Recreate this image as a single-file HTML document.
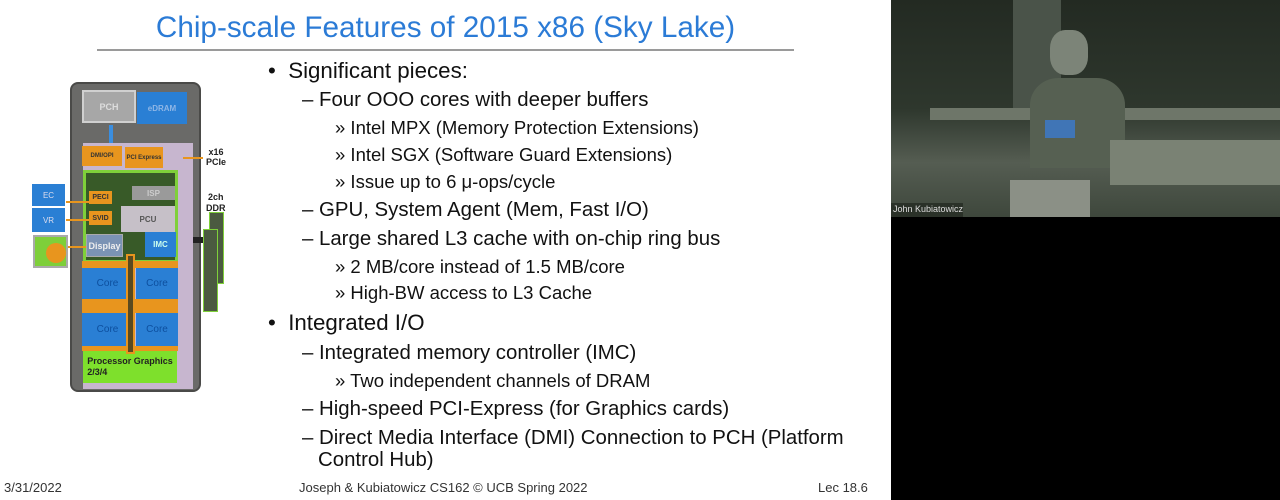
<!DOCTYPE html>
<html><head><meta charset="utf-8"><style>
body{margin:0;width:1280px;height:500px;position:relative;background:#fff;overflow:hidden;font-family:"Liberation Sans",Arial,sans-serif;color:#111}
.a{position:absolute;white-space:nowrap}
.l1{font-size:22.3px;left:268px}
.l2{font-size:20.4px;left:302px}
.l3{font-size:18.5px;left:335px}
.b{position:absolute;box-sizing:border-box}
.t{display:flex;align-items:center;justify-content:center;font-size:8px;color:#ddd;font-weight:bold}
</style></head><body>
<div class="a" style="left:0;width:891px;top:11px;text-align:center;font-size:29.7px;color:#2b7bd6">Chip-scale Features of 2015 x86 (Sky Lake)</div>
<div class="b" style="left:97px;top:49px;width:697px;height:2px;background:#9a9a9a"></div>

<div class="a l1" style="top:58px">•&nbsp;&nbsp;Significant pieces:</div>
<div class="a l2" style="top:89px">– Four OOO cores with deeper buffers</div>
<div class="a l3" style="top:117px">» Intel MPX (Memory Protection Extensions)</div>
<div class="a l3" style="top:144px">» Intel SGX (Software Guard Extensions)</div>
<div class="a l3" style="top:171px">» Issue up to 6 μ-ops/cycle</div>
<div class="a l2" style="top:199px">– GPU, System Agent (Mem, Fast I/O)</div>
<div class="a l2" style="top:228px">– Large shared L3 cache with on-chip ring bus</div>
<div class="a l3" style="top:256px">» 2 MB/core instead of 1.5 MB/core</div>
<div class="a l3" style="top:282px">» High-BW access to L3 Cache</div>
<div class="a l1" style="top:310px">•&nbsp;&nbsp;Integrated I/O</div>
<div class="a l2" style="top:342px">– Integrated memory controller (IMC)</div>
<div class="a l3" style="top:370px">» Two independent channels of DRAM</div>
<div class="a l2" style="top:398px">– High-speed PCI-Express (for Graphics cards)</div>
<div class="a l2" style="top:427px">– Direct Media Interface (DMI) Connection to PCH (Platform</div>
<div class="a l2" style="top:449px;left:318px">Control Hub)</div>

<div class="a" style="left:4px;top:480px;font-size:13px;color:#333">3/31/2022</div>
<div class="a" style="left:299px;top:480px;font-size:13px;color:#333">Joseph &amp; Kubiatowicz CS162 © UCB Spring 2022</div>
<div class="a" style="left:818px;top:480px;font-size:13px;color:#333">Lec 18.6</div>

<!-- chip -->
<div class="b" style="left:70px;top:82px;width:131px;height:310px;background:#6a6a68;border:2px solid #4a4a48;border-radius:8px"></div>
<div class="b t" style="left:82px;top:90px;width:54px;height:33px;background:#a7a7a7;border:2px solid #d0d0d0;font-size:9px">PCH</div>
<div class="b t" style="left:137px;top:92px;width:50px;height:32px;background:#2a7fd4;font-size:8px;color:#8fb6e6">eDRAM</div>
<div class="b" style="left:109px;top:125px;width:4px;height:20px;background:#3a8ee0"></div>
<div class="b" style="left:83px;top:143px;width:110px;height:246px;background:#c7b6cf"></div>
<div class="b t" style="left:82px;top:146px;width:40px;height:20px;background:#e8951e;color:#333;font-size:6px">DMI/OPI</div>
<div class="b t" style="left:125px;top:147px;width:38px;height:21px;background:#e8951e;color:#333;font-size:6px">PCI Express</div>
<div class="b" style="left:83px;top:170px;width:95px;height:93px;background:#385a28;border:3px solid #7fd03a"></div>
<div class="b t" style="left:132px;top:186px;width:43px;height:14px;background:#9a9a9a;color:#ccc">ISP</div>
<div class="b t" style="left:89px;top:191px;width:23px;height:13px;background:#e8951e;color:#333;font-size:7px">PECI</div>
<div class="b t" style="left:89px;top:211px;width:23px;height:14px;background:#e8951e;color:#333;font-size:7px">SVID</div>
<div class="b t" style="left:121px;top:206px;width:54px;height:26px;background:#c6c0c8;color:#555">PCU</div>
<div class="b t" style="left:86px;top:234px;width:37px;height:23px;background:#7b93b4;border:1px solid #aaa;color:#eee;font-size:9px">Display</div>
<div class="b t" style="left:145px;top:232px;width:31px;height:25px;background:#2a7fd4;color:#cfe">IMC</div>
<div class="b" style="left:82px;top:261px;width:96px;height:7px;background:#e8951e"></div>
<div class="b t" style="left:82px;top:268px;width:51px;height:31px;background:#2a7fd4;color:#0d4f9e;font-size:10px;font-weight:normal">Core</div>
<div class="b t" style="left:136px;top:268px;width:42px;height:31px;background:#2a7fd4;color:#0d4f9e;font-size:10px;font-weight:normal">Core</div>
<div class="b" style="left:82px;top:299px;width:96px;height:14px;background:#e8951e"></div>
<div class="b t" style="left:82px;top:313px;width:51px;height:33px;background:#2a7fd4;color:#0d4f9e;font-size:10px;font-weight:normal">Core</div>
<div class="b t" style="left:136px;top:313px;width:42px;height:33px;background:#2a7fd4;color:#0d4f9e;font-size:10px;font-weight:normal">Core</div>
<div class="b" style="left:82px;top:346px;width:96px;height:5px;background:#e8951e"></div>
<div class="b t" style="left:83px;top:351px;width:94px;height:32px;background:#7ee02c;color:#222;font-size:9px;flex-direction:column;line-height:11px">Processor Graphics<br>2/3/4</div>
<div class="b" style="left:126px;top:254px;width:9px;height:100px;border:2px solid #e8951e;background:#5a4a20"></div>
<div class="b t" style="left:32px;top:184px;width:33px;height:22px;background:#2a7fd4;color:#dde;font-size:8px;font-weight:normal">EC</div>
<div class="b t" style="left:32px;top:208px;width:33px;height:24px;background:#2a7fd4;color:#dde;font-size:8px;font-weight:normal">VR</div>
<div class="b" style="left:33px;top:235px;width:35px;height:33px;background:#7ecf3a;border:2px solid #aaa"></div>
<div class="b" style="left:46px;top:243px;width:20px;height:20px;background:#e8951e;border-radius:50%"></div>
<div class="b" style="left:183px;top:157px;width:20px;height:2px;background:#e8951e"></div>
<div class="b" style="left:66px;top:201px;width:23px;height:2px;background:#e8951e"></div>
<div class="b" style="left:66px;top:219px;width:23px;height:2px;background:#e8951e"></div>
<div class="b" style="left:68px;top:246px;width:18px;height:2px;background:#e8951e"></div>
<div class="a" style="left:206px;top:147px;font-size:9px;font-weight:bold;line-height:10px;text-align:center;color:#222">x16<br>PCIe</div>
<div class="a" style="left:206px;top:192px;font-size:9px;font-weight:bold;line-height:11px;text-align:center;color:#222">2ch<br>DDR</div>
<div class="b" style="left:209px;top:212px;width:15px;height:72px;background:#4b5a40;border:1px solid #7fd03a"></div>
<div class="b" style="left:203px;top:229px;width:15px;height:83px;background:#4b5a40;border:1px solid #7fd03a"></div>
<div class="b" style="left:193px;top:237px;width:10px;height:6px;background:#222"></div>

<!-- video -->
<div class="b" style="left:891px;top:0;width:389px;height:500px;background:#000"></div>
<div class="b" style="left:891px;top:0;width:389px;height:217px;background:linear-gradient(180deg,#232a22 0%,#2e372d 50%,#555d52 75%,#3e473c 100%)"></div>
<div class="b" style="left:1013px;top:0;width:48px;height:120px;background:#4a5349"></div>
<div class="b" style="left:930px;top:108px;width:350px;height:12px;background:#6e7669"></div>
<div class="b" style="left:1050px;top:30px;width:38px;height:45px;background:#7c8478;border-radius:40%"></div>
<div class="b" style="left:1030px;top:78px;width:95px;height:90px;background:#566052;border-radius:30% 30% 0 0"></div>
<div class="b" style="left:1045px;top:120px;width:30px;height:18px;background:#3b7bd0;opacity:.8"></div>
<div class="b" style="left:1110px;top:140px;width:170px;height:45px;background:#7a8274"></div>
<div class="b" style="left:1010px;top:180px;width:80px;height:37px;background:#8b9086"></div>
<div class="b" style="left:891px;top:203px;width:72px;height:14px;background:#2a3128"></div>
<div class="a" style="left:893px;top:204px;font-size:9px;color:#ddd">John Kubiatowicz</div>
</body></html>
